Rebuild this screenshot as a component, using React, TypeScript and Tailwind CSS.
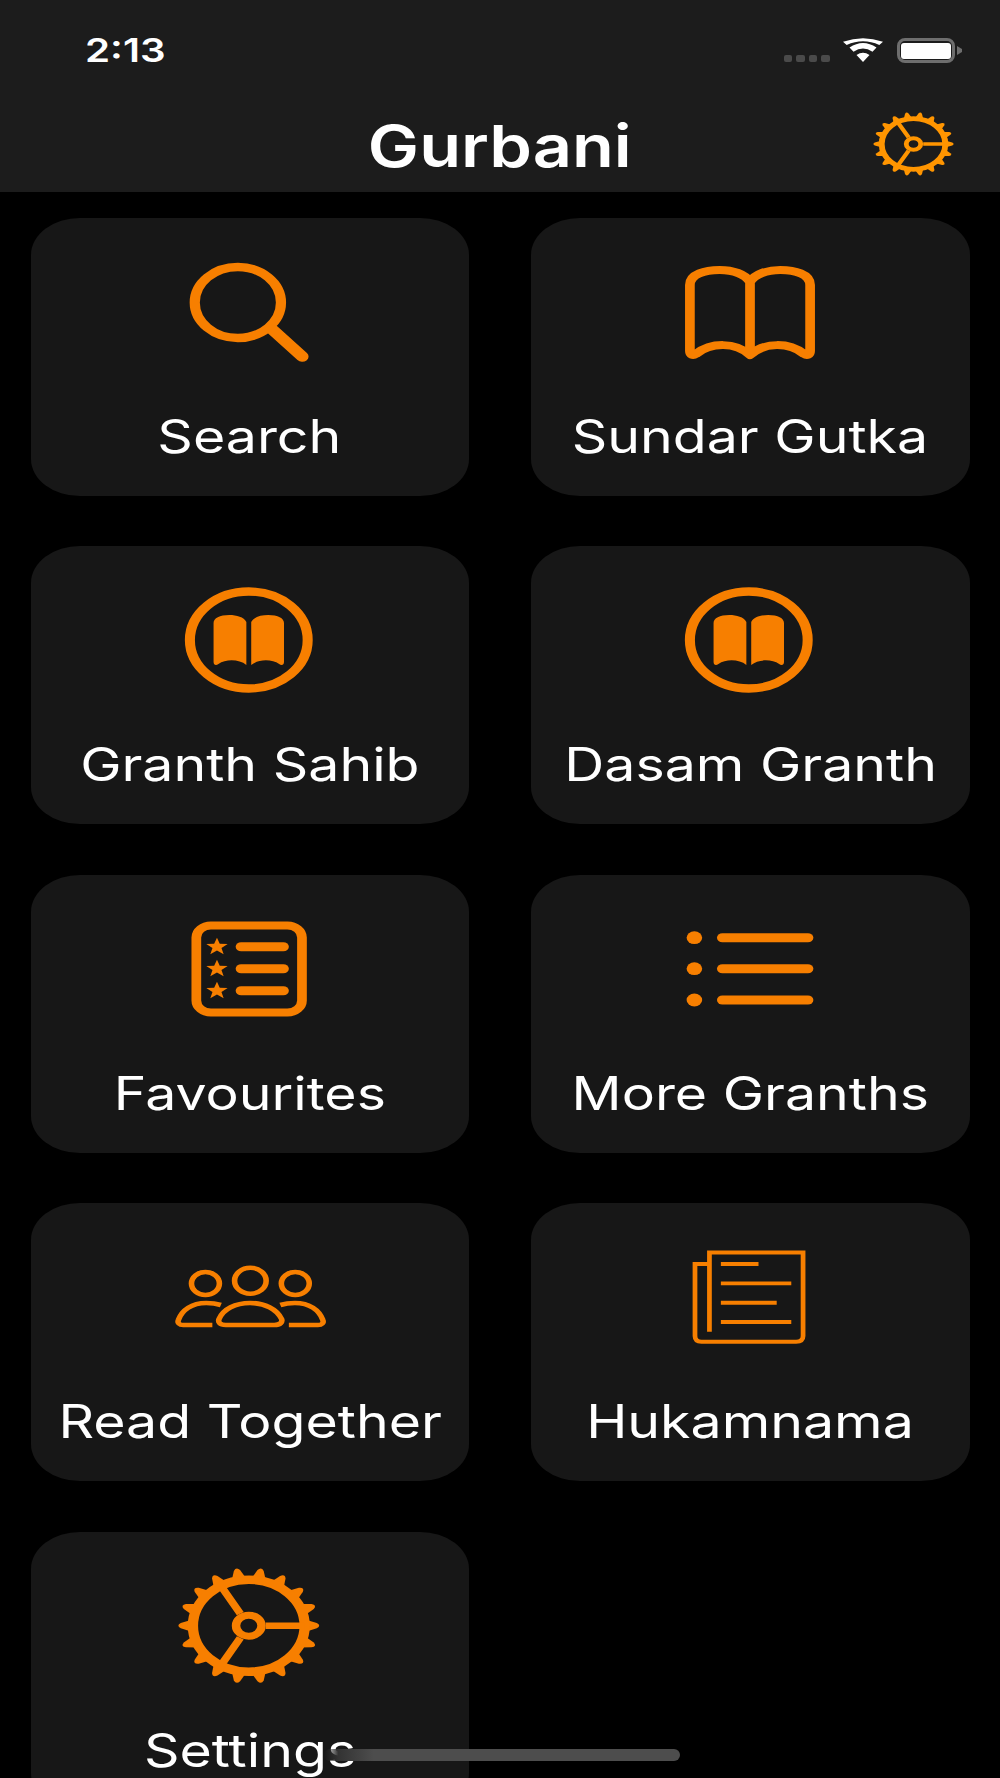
const TEETH = Array.from({ length: 18 }, (_, i) => i * 20);

const Icon = ({ children }: { children: React.ReactNode }) => (
  <svg viewBox="0 0 140 130" preserveAspectRatio="none" className="w-[170px] h-[130px] shrink-0">
    {children}
  </svg>
);

const GearShape = () => (
  <g>
    {TEETH.map((deg) => (
      <path key={deg} d="M47 -6 L56 -2.6 Q60 0 56 2.6 L47 6 Z" transform={`rotate(${deg})`} fill="currentColor" />
    ))}
    <circle r="46" fill="none" stroke="currentColor" strokeWidth="8.5" />
    <circle r="10.5" fill="none" stroke="currentColor" strokeWidth="7" />
    <path d="M14 0 H46 M-7 -12.1 L-23 -39.8 M-7 12.1 L-23 39.8" fill="none" stroke="currentColor" strokeWidth="6.5" />
  </g>
);

const SearchIcon = () => (
  <Icon>
    <circle cx="60" cy="54.5" r="35.5" fill="none" stroke="currentColor" strokeWidth="8.4" />
    <path d="M88.8 82 L113 108.5" stroke="currentColor" strokeWidth="10.5" strokeLinecap="round" />
  </Icon>
);

const BookIcon = () => (
  <Icon>
    <path
      d="M70 34 C66 26 56 22 45 22 C33 22 20.5 26 20.5 37 V103 C20.5 107 23 108 25.5 106 C38 94 58 94 70 107 C82 94 102 94 114.5 106 C117 108 119.5 107 119.5 103 V37 C119.5 26 107 22 95 22 C84 22 74 26 70 34 V107"
      fill="none"
      stroke="currentColor"
      strokeWidth="8"
      strokeLinejoin="round"
    />
  </Icon>
);

const CircleBookIcon = () => (
  <Icon>
    <circle cx="69" cy="64" r="48.5" fill="none" stroke="currentColor" strokeWidth="8.3" />
    <path
      fill="currentColor"
      d="M67 46 C65 41 59 39 53 39 C45 39 40 42 40 47 V86 C40 89 42 90 44 88 C50 83 61 83 67 89 Z M71 46 C73 41 79 39 85 39 C93 39 98 42 98 47 V86 C98 89 96 90 94 88 C88 83 77 83 71 89 Z"
    />
  </Icon>
);

const FavouritesIcon = () => (
  <Icon>
    <rect x="25.8" y="20.5" width="87" height="87" rx="12" fill="none" stroke="currentColor" strokeWidth="8" />
    {[41.7, 63.7, 85.7].map((y) => (
      <g key={y}>
        <path
          transform={`translate(42.8 ${y})`}
          fill="currentColor"
          d="M0 -9 L2.3 -2.9 L8.8 -2.8 L3.7 1.2 L5.5 7.5 L0 3.8 L-5.5 7.5 L-3.7 1.2 L-8.8 -2.8 L-2.3 -2.9 Z"
        />
        <path d={`M62.7 ${y} H97.5`} stroke="currentColor" strokeWidth="9" strokeLinecap="round" />
      </g>
    ))}
  </Icon>
);

const ListIcon = () => (
  <Icon>
    {[32.7, 63.7, 95].map((y) => (
      <g key={y}>
        <circle cx="24.2" cy={y} r="6.4" fill="currentColor" />
        <path d={`M47.3 ${y} H117.7`} stroke="currentColor" strokeWidth="9" strokeLinecap="round" />
      </g>
    ))}
  </Icon>
);

const PeopleIcon = () => (
  <Icon>
    <g fill="none" stroke="currentColor" strokeWidth="4.6">
      <circle cx="70.3" cy="47.7" r="13" />
      <circle cx="33.3" cy="50.5" r="11.5" />
      <circle cx="107.3" cy="50.5" r="11.5" />
      <path d="M50 92 C45 92 43.5 89 44.5 86 C48 76 58 70 70 70 C82 70 92 76 96 86 C97 89 95 92 90 92 Z" />
      <path d="M46 72 C42 70.5 38 70 34 70 C22 70 14 77 11 87 C10 90 12 92 15 92 H39" />
      <path d="M95 72 C99 70.5 103 70 107 70 C119 70 127 77 130 87 C131 90 129 92 126 92 H102" />
    </g>
  </Icon>
);

const NewsIcon = () => (
  <Icon>
    <path
      d="M36.6 31 H24.7 V103 Q24.7 108.7 30 108.7 H108 Q113.7 108.7 113.7 103 V19.5 H36.6 V98.7 M46 31 H77 M46 50.4 H104 M46 69.7 H92 M46 89 H104"
      fill="none"
      stroke="currentColor"
      strokeWidth="3.9"
    />
  </Icon>
);

const SettingsIcon = () => (
  <Icon>
    <g transform="translate(69 63.7)">
      <GearShape />
    </g>
  </Icon>
);

const items = [
  { label: "Search", icon: <SearchIcon /> },
  { label: "Sundar Gutka", icon: <BookIcon /> },
  { label: "Granth Sahib", icon: <CircleBookIcon /> },
  { label: "Dasam Granth", icon: <CircleBookIcon /> },
  { label: "Favourites", icon: <FavouritesIcon /> },
  { label: "More Granths", icon: <ListIcon /> },
  { label: "Read Together", icon: <PeopleIcon /> },
  { label: "Hukamnama", icon: <NewsIcon /> },
  { label: "Settings", icon: <SettingsIcon /> },
];

const App = () => {
  return (
    <div className="relative h-[1778px] w-[1000px] overflow-hidden bg-black font-['Inter',sans-serif] text-white">
      {/* Status bar + nav */}
      <header className="h-[192px] bg-[#1c1c1c]">
        <div className="flex h-[100px] items-start justify-between pl-[85px] pr-[38px] pt-[31px]">
          <span className="inline-block origin-left scale-x-[1.22] text-[33px] font-semibold leading-[38px]">2:13</span>
          <div className="flex items-start">
            <div className="mr-[13px] mt-[24px] flex gap-[4px]">
              <div className="h-[7px] w-[8.5px] rounded-[2px] bg-[#4a4a4a]" />
              <div className="h-[7px] w-[8.5px] rounded-[2px] bg-[#4a4a4a]" />
              <div className="h-[7px] w-[8.5px] rounded-[2px] bg-[#4a4a4a]" />
              <div className="h-[7px] w-[8.5px] rounded-[2px] bg-[#4a4a4a]" />
            </div>
            <svg viewBox="0 0 40 24" className="mt-[7px] h-[24px] w-[40px]" preserveAspectRatio="none">
              <path d="M20 24 L13.5 17 Q20 12.5 26.5 17 Z M10.5 13.8 L6.5 9.6 Q20 0.5 33.5 9.6 L29.5 13.8 Q20 7 10.5 13.8 Z M3.7 7 L0 3.8 Q20 -3.5 40 3.8 L36.3 7 Q20 -0.5 3.7 7 Z" fill="white" />
            </svg>
            <div className="ml-[14px] mt-[7px] flex items-center">
              <div className="h-[25px] w-[58.5px] rounded-[8px] border-[3px] border-[#6e6e6e] p-[1.5px]">
                <div className="h-full w-full rounded-[3px] bg-white" />
              </div>
              <svg viewBox="0 0 5 9" className="ml-[2px] h-[9px] w-[5px]">
                <path d="M0 0 L5 3 V6 L0 9 Z" fill="#6e6e6e" />
              </svg>
            </div>
          </div>
        </div>
        <div className="grid h-[92px] grid-cols-[1fr_auto_1fr] items-center">
          <div />
          <h1 className="inline-block scale-x-[1.18] pb-[1px] text-[58px] font-semibold leading-[64px]">Gurbani</h1>
          <div className="justify-self-end pb-[4px] pr-[45px] text-[#ff9500]">
            <svg viewBox="-60 -60 120 120" preserveAspectRatio="none" className="h-[66px] w-[83px]">
              <GearShape />
            </svg>
          </div>
        </div>
      </header>

      <main className="grid grid-cols-2 auto-rows-[278px] gap-x-[62px] gap-y-[50.4px] px-[30.5px] pt-[26px]">
        {items.map((item) => (
          <div
            key={item.label}
            className="flex flex-col items-center rounded-[49px_/_37px] bg-[#171717] pt-[30px] text-[#f77f00]"
          >
            {item.icon}
            <span className="mt-[28px] inline-block scale-x-[1.205] whitespace-nowrap text-[46px] leading-[60px] text-white">
              {item.label}
            </span>
          </div>
        ))}
      </main>

      {/* Home indicator */}
      <div className="absolute left-[324px] top-[1749px] h-[12px] w-[356px] rounded-full bg-[linear-gradient(to_right,transparent,#333333_4%,#4d4d4d_14%)]" />
    </div>
  );
};

export default App;
